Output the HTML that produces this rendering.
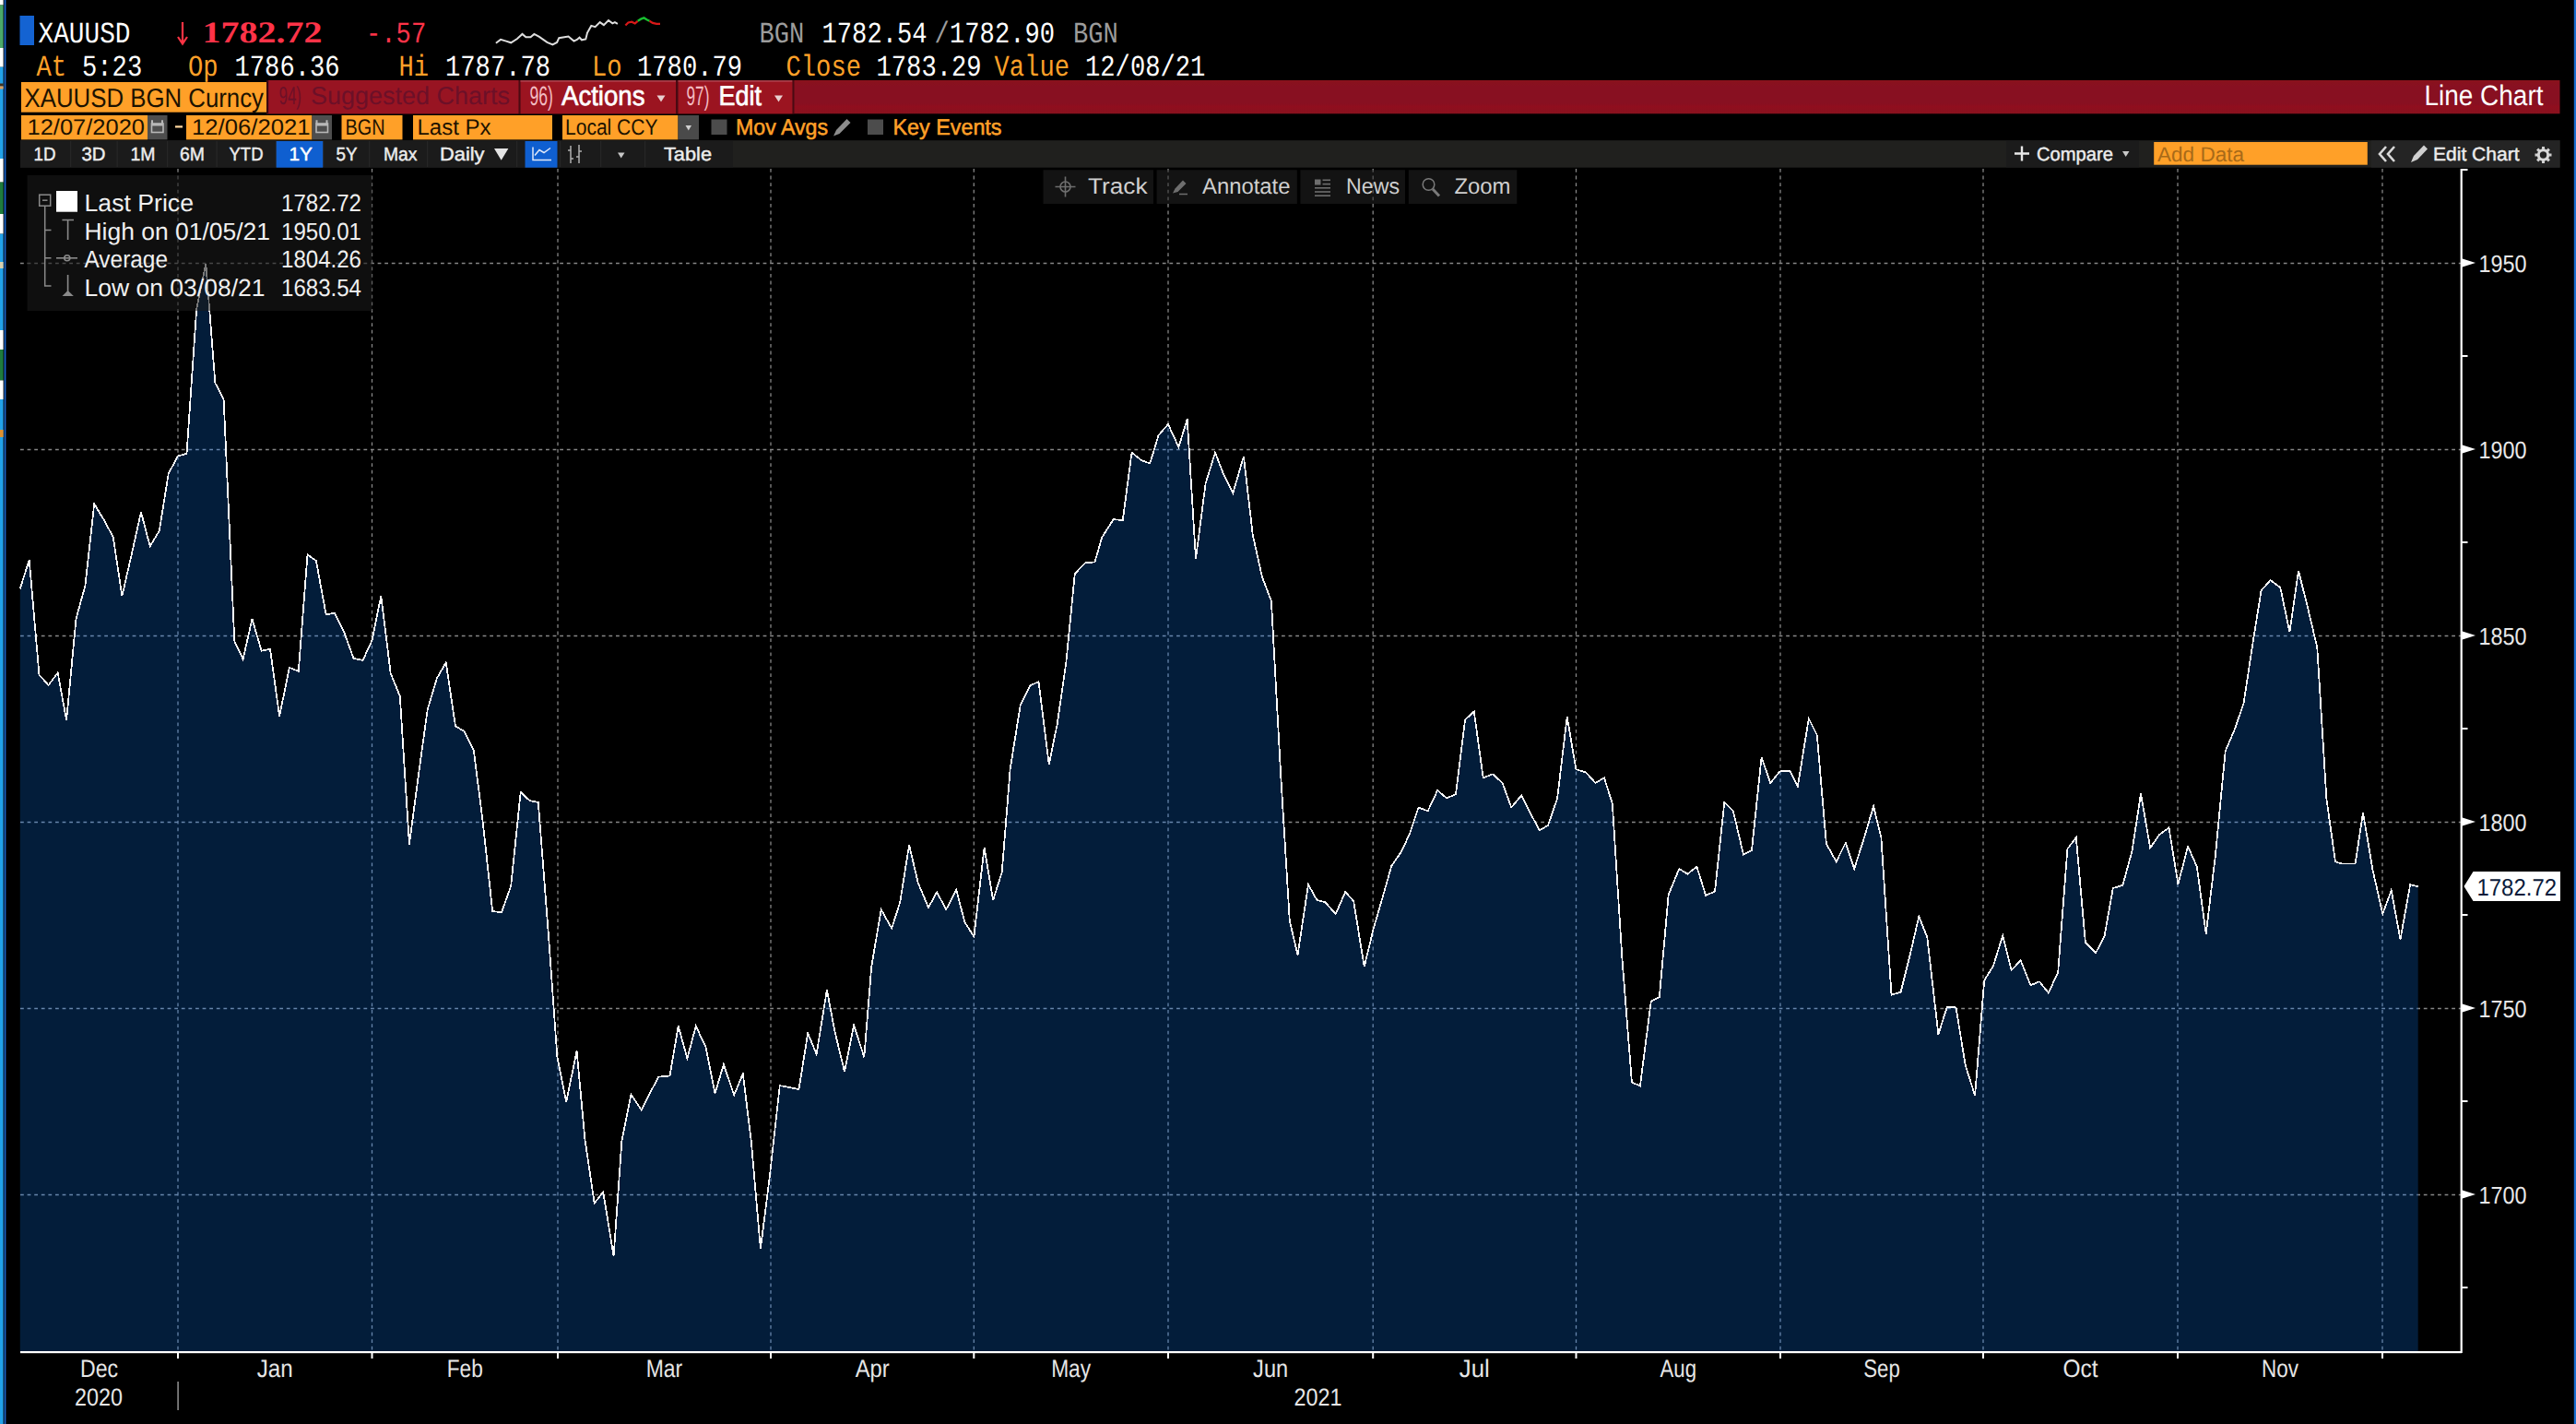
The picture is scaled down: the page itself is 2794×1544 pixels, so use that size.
<!DOCTYPE html>
<html><head><meta charset="utf-8"><title>XAUUSD BGN Curncy - Line Chart</title>
<style>html,body{margin:0;padding:0;background:#000;overflow:hidden}svg{display:block}text{white-space:pre}</style></head>
<body><svg width="2794" height="1544" viewBox="0 0 2794 1544" text-rendering="geometricPrecision">
<rect x="0" y="0" width="2794" height="1544" fill="#000" />
<clipPath id="fillclip"><polygon points="21.8,1466 21.8,638.4 31.7,607.0 42.5,731.7 52.6,742.9 62.7,729.4 72.1,781.1 82.5,671.0 92.4,635.1 102.2,546.3 112.6,563.6 122.7,582.2 132.4,646.3 142.7,601.3 153.0,555.3 162.7,592.4 172.8,575.5 182.7,513.7 192.8,494.6 202.5,491.7 213.2,334.8 223.3,285.8 233.4,415.3 242.6,432.7 254.3,695.0 263.6,714.8 273.5,671.0 283.6,705.8 293.0,703.6 303.1,776.6 313.9,723.8 323.8,727.9 333.5,601.3 342.9,608.1 353.7,666.5 363.1,664.7 373.3,685.6 383.4,713.7 393.5,716.0 403.4,694.6 413.3,646.3 423.7,730.1 433.8,754.8 443.9,915.5 453.8,841.3 463.7,769.4 473.8,735.7 483.7,718.2 494.0,787.4 503.7,793.0 513.8,813.3 523.9,893.0 534.2,988.1 544.0,989.2 554.2,960.7 564.7,858.9 574.2,867.9 583.8,870.1 594.2,1003.8 604.3,1145.2 614.2,1194.6 625.6,1139.6 634.4,1235.1 644.7,1304.7 654.2,1292.4 665.6,1362.0 674.4,1237.3 684.5,1186.7 695.7,1203.6 704.7,1185.6 714.4,1167.6 726.5,1166.5 735.7,1112.6 745.4,1147.4 754.8,1112.6 765.4,1135.1 775.5,1185.6 784.9,1154.2 796.2,1187.4 805.8,1164.3 814.8,1237.3 824.9,1354.2 835.1,1273.3 845.8,1177.1 855.3,1178.9 866.5,1181.1 876.2,1120.4 885.6,1142.9 896.9,1073.3 905.4,1118.2 916.0,1162.0 926.1,1111.5 937.3,1146.3 945.2,1048.1 955.7,986.3 967.2,1006.5 976.2,978.4 986.1,916.2 995.7,957.1 1007.0,984.0 1016.2,967.2 1026.1,986.3 1037.3,964.9 1046.3,999.8 1056.4,1015.5 1067.6,918.9 1077.1,976.2 1086.7,945.8 1095.7,833.5 1106.7,764.9 1117.1,743.6 1126.5,739.1 1137.8,829.0 1146.7,785.2 1156.4,717.8 1165.8,622.2 1177.3,610.0 1187.4,609.5 1195.3,582.5 1207.6,563.2 1217.8,564.0 1227.5,490.7 1238.0,499.1 1247.3,502.5 1256.5,472.1 1267.0,460.0 1278.4,484.8 1287.7,454.4 1297.0,606.1 1307.6,524.4 1318.0,490.7 1327.8,516.0 1337.4,534.5 1348.9,494.9 1358.8,580.0 1368.9,625.5 1378.9,651.6 1389.1,838.9 1398.8,998.4 1407.5,1035.5 1419.0,959.1 1428.4,976.0 1437.4,978.2 1448.7,991.2 1459.2,967.0 1468.2,977.1 1479.7,1048.3 1489.6,1007.4 1499.7,972.6 1509.3,938.9 1519.4,924.3 1529.1,904.0 1538.5,875.5 1548.7,879.3 1559.2,856.9 1568.9,865.4 1579.0,861.3 1589.1,780.4 1598.8,771.5 1608.7,843.4 1619.0,839.3 1629.6,849.0 1639.2,875.5 1650.2,862.5 1659.9,881.6 1669.6,900.2 1679.0,895.1 1689.1,865.8 1699.7,777.1 1709.4,834.2 1720.2,837.5 1730.3,848.8 1740.0,843.6 1748.8,871.2 1759.3,1037.5 1769.9,1173.5 1778.9,1177.5 1790.8,1085.4 1799.8,1081.3 1809.7,970.1 1821.3,942.0 1830.3,947.6 1840.4,939.8 1850.1,970.8 1860.0,966.7 1870.3,870.1 1879.8,879.1 1891.0,926.7 1900.0,921.8 1910.6,820.7 1920.2,849.2 1930.3,836.4 1941.6,836.0 1949.9,852.6 1961.8,779.1 1970.8,797.1 1980.9,915.1 1991.7,934.2 2001.8,913.9 2011.2,942.0 2021.6,909.4 2032.1,874.2 2040.4,908.3 2051.5,1078.7 2061.6,1075.7 2071.7,1035.3 2081.3,993.7 2090.3,1016.2 2102.4,1121.6 2111.8,1091.7 2121.5,1092.4 2131.8,1155.3 2142.1,1187.9 2152.2,1063.1 2161.9,1047.4 2172.2,1014.4 2181.7,1051.9 2191.6,1041.3 2202.4,1068.3 2212.0,1064.3 2221.9,1076.6 2232.2,1054.2 2242.4,920.4 2251.8,908.1 2261.9,1022.0 2273.1,1033.3 2282.6,1014.8 2291.8,963.1 2302.4,959.8 2312.5,922.7 2322.0,860.6 2332.2,919.3 2342.4,904.7 2352.5,897.5 2362.4,958.7 2373.1,917.8 2382.8,939.6 2392.7,1012.6 2402.8,928.3 2413.7,814.5 2423.8,790.9 2433.5,762.8 2443.4,697.6 2452.6,640.3 2462.5,629.1 2473.3,637.0 2483.4,685.3 2493.0,619.0 2502.9,658.3 2513.3,702.1 2523.4,866.2 2533.0,934.4 2540.0,936.5 2554.6,936.5 2563.0,881.1 2573.5,943.1 2584.3,991.0 2593.7,965.4 2603.5,1018.6 2614.2,959.1 2622.7,961.3 2622.7,1466"/></clipPath>
<g stroke="#868686" stroke-width="1.3" stroke-dasharray="3.8 3.8" >
<line x1="22" y1="285.5" x2="2670" y2="285.5"/>
<line x1="22" y1="487.5" x2="2670" y2="487.5"/>
<line x1="22" y1="689.5" x2="2670" y2="689.5"/>
<line x1="22" y1="891.5" x2="2670" y2="891.5"/>
<line x1="22" y1="1093.5" x2="2670" y2="1093.5"/>
<line x1="22" y1="1295.5" x2="2670" y2="1295.5"/>
<line x1="193" y1="183" x2="193" y2="1466"/>
<line x1="403.5" y1="183" x2="403.5" y2="1466"/>
<line x1="605" y1="183" x2="605" y2="1466"/>
<line x1="836" y1="183" x2="836" y2="1466"/>
<line x1="1056.3" y1="183" x2="1056.3" y2="1466"/>
<line x1="1267" y1="183" x2="1267" y2="1466"/>
<line x1="1489.2" y1="183" x2="1489.2" y2="1466"/>
<line x1="1709.5" y1="183" x2="1709.5" y2="1466"/>
<line x1="1931" y1="183" x2="1931" y2="1466"/>
<line x1="2151" y1="183" x2="2151" y2="1466"/>
<line x1="2362" y1="183" x2="2362" y2="1466"/>
<line x1="2584" y1="183" x2="2584" y2="1466"/>
</g>
<polygon points="21.8,1466 21.8,638.4 31.7,607.0 42.5,731.7 52.6,742.9 62.7,729.4 72.1,781.1 82.5,671.0 92.4,635.1 102.2,546.3 112.6,563.6 122.7,582.2 132.4,646.3 142.7,601.3 153.0,555.3 162.7,592.4 172.8,575.5 182.7,513.7 192.8,494.6 202.5,491.7 213.2,334.8 223.3,285.8 233.4,415.3 242.6,432.7 254.3,695.0 263.6,714.8 273.5,671.0 283.6,705.8 293.0,703.6 303.1,776.6 313.9,723.8 323.8,727.9 333.5,601.3 342.9,608.1 353.7,666.5 363.1,664.7 373.3,685.6 383.4,713.7 393.5,716.0 403.4,694.6 413.3,646.3 423.7,730.1 433.8,754.8 443.9,915.5 453.8,841.3 463.7,769.4 473.8,735.7 483.7,718.2 494.0,787.4 503.7,793.0 513.8,813.3 523.9,893.0 534.2,988.1 544.0,989.2 554.2,960.7 564.7,858.9 574.2,867.9 583.8,870.1 594.2,1003.8 604.3,1145.2 614.2,1194.6 625.6,1139.6 634.4,1235.1 644.7,1304.7 654.2,1292.4 665.6,1362.0 674.4,1237.3 684.5,1186.7 695.7,1203.6 704.7,1185.6 714.4,1167.6 726.5,1166.5 735.7,1112.6 745.4,1147.4 754.8,1112.6 765.4,1135.1 775.5,1185.6 784.9,1154.2 796.2,1187.4 805.8,1164.3 814.8,1237.3 824.9,1354.2 835.1,1273.3 845.8,1177.1 855.3,1178.9 866.5,1181.1 876.2,1120.4 885.6,1142.9 896.9,1073.3 905.4,1118.2 916.0,1162.0 926.1,1111.5 937.3,1146.3 945.2,1048.1 955.7,986.3 967.2,1006.5 976.2,978.4 986.1,916.2 995.7,957.1 1007.0,984.0 1016.2,967.2 1026.1,986.3 1037.3,964.9 1046.3,999.8 1056.4,1015.5 1067.6,918.9 1077.1,976.2 1086.7,945.8 1095.7,833.5 1106.7,764.9 1117.1,743.6 1126.5,739.1 1137.8,829.0 1146.7,785.2 1156.4,717.8 1165.8,622.2 1177.3,610.0 1187.4,609.5 1195.3,582.5 1207.6,563.2 1217.8,564.0 1227.5,490.7 1238.0,499.1 1247.3,502.5 1256.5,472.1 1267.0,460.0 1278.4,484.8 1287.7,454.4 1297.0,606.1 1307.6,524.4 1318.0,490.7 1327.8,516.0 1337.4,534.5 1348.9,494.9 1358.8,580.0 1368.9,625.5 1378.9,651.6 1389.1,838.9 1398.8,998.4 1407.5,1035.5 1419.0,959.1 1428.4,976.0 1437.4,978.2 1448.7,991.2 1459.2,967.0 1468.2,977.1 1479.7,1048.3 1489.6,1007.4 1499.7,972.6 1509.3,938.9 1519.4,924.3 1529.1,904.0 1538.5,875.5 1548.7,879.3 1559.2,856.9 1568.9,865.4 1579.0,861.3 1589.1,780.4 1598.8,771.5 1608.7,843.4 1619.0,839.3 1629.6,849.0 1639.2,875.5 1650.2,862.5 1659.9,881.6 1669.6,900.2 1679.0,895.1 1689.1,865.8 1699.7,777.1 1709.4,834.2 1720.2,837.5 1730.3,848.8 1740.0,843.6 1748.8,871.2 1759.3,1037.5 1769.9,1173.5 1778.9,1177.5 1790.8,1085.4 1799.8,1081.3 1809.7,970.1 1821.3,942.0 1830.3,947.6 1840.4,939.8 1850.1,970.8 1860.0,966.7 1870.3,870.1 1879.8,879.1 1891.0,926.7 1900.0,921.8 1910.6,820.7 1920.2,849.2 1930.3,836.4 1941.6,836.0 1949.9,852.6 1961.8,779.1 1970.8,797.1 1980.9,915.1 1991.7,934.2 2001.8,913.9 2011.2,942.0 2021.6,909.4 2032.1,874.2 2040.4,908.3 2051.5,1078.7 2061.6,1075.7 2071.7,1035.3 2081.3,993.7 2090.3,1016.2 2102.4,1121.6 2111.8,1091.7 2121.5,1092.4 2131.8,1155.3 2142.1,1187.9 2152.2,1063.1 2161.9,1047.4 2172.2,1014.4 2181.7,1051.9 2191.6,1041.3 2202.4,1068.3 2212.0,1064.3 2221.9,1076.6 2232.2,1054.2 2242.4,920.4 2251.8,908.1 2261.9,1022.0 2273.1,1033.3 2282.6,1014.8 2291.8,963.1 2302.4,959.8 2312.5,922.7 2322.0,860.6 2332.2,919.3 2342.4,904.7 2352.5,897.5 2362.4,958.7 2373.1,917.8 2382.8,939.6 2392.7,1012.6 2402.8,928.3 2413.7,814.5 2423.8,790.9 2433.5,762.8 2443.4,697.6 2452.6,640.3 2462.5,629.1 2473.3,637.0 2483.4,685.3 2493.0,619.0 2502.9,658.3 2513.3,702.1 2523.4,866.2 2533.0,934.4 2540.0,936.5 2554.6,936.5 2563.0,881.1 2573.5,943.1 2584.3,991.0 2593.7,965.4 2603.5,1018.6 2614.2,959.1 2622.7,961.3 2622.7,1466" fill="#031d3a"/>
<g stroke="#6685ab" stroke-width="1.3" stroke-dasharray="3.8 3.8" clip-path="url(#fillclip)">
<line x1="22" y1="285.5" x2="2670" y2="285.5"/>
<line x1="22" y1="487.5" x2="2670" y2="487.5"/>
<line x1="22" y1="689.5" x2="2670" y2="689.5"/>
<line x1="22" y1="891.5" x2="2670" y2="891.5"/>
<line x1="22" y1="1093.5" x2="2670" y2="1093.5"/>
<line x1="22" y1="1295.5" x2="2670" y2="1295.5"/>
<line x1="193" y1="183" x2="193" y2="1466"/>
<line x1="403.5" y1="183" x2="403.5" y2="1466"/>
<line x1="605" y1="183" x2="605" y2="1466"/>
<line x1="836" y1="183" x2="836" y2="1466"/>
<line x1="1056.3" y1="183" x2="1056.3" y2="1466"/>
<line x1="1267" y1="183" x2="1267" y2="1466"/>
<line x1="1489.2" y1="183" x2="1489.2" y2="1466"/>
<line x1="1709.5" y1="183" x2="1709.5" y2="1466"/>
<line x1="1931" y1="183" x2="1931" y2="1466"/>
<line x1="2151" y1="183" x2="2151" y2="1466"/>
<line x1="2362" y1="183" x2="2362" y2="1466"/>
<line x1="2584" y1="183" x2="2584" y2="1466"/>
</g>
<polyline points="21.8,638.4 31.7,607.0 42.5,731.7 52.6,742.9 62.7,729.4 72.1,781.1 82.5,671.0 92.4,635.1 102.2,546.3 112.6,563.6 122.7,582.2 132.4,646.3 142.7,601.3 153.0,555.3 162.7,592.4 172.8,575.5 182.7,513.7 192.8,494.6 202.5,491.7 213.2,334.8 223.3,285.8 233.4,415.3 242.6,432.7 254.3,695.0 263.6,714.8 273.5,671.0 283.6,705.8 293.0,703.6 303.1,776.6 313.9,723.8 323.8,727.9 333.5,601.3 342.9,608.1 353.7,666.5 363.1,664.7 373.3,685.6 383.4,713.7 393.5,716.0 403.4,694.6 413.3,646.3 423.7,730.1 433.8,754.8 443.9,915.5 453.8,841.3 463.7,769.4 473.8,735.7 483.7,718.2 494.0,787.4 503.7,793.0 513.8,813.3 523.9,893.0 534.2,988.1 544.0,989.2 554.2,960.7 564.7,858.9 574.2,867.9 583.8,870.1 594.2,1003.8 604.3,1145.2 614.2,1194.6 625.6,1139.6 634.4,1235.1 644.7,1304.7 654.2,1292.4 665.6,1362.0 674.4,1237.3 684.5,1186.7 695.7,1203.6 704.7,1185.6 714.4,1167.6 726.5,1166.5 735.7,1112.6 745.4,1147.4 754.8,1112.6 765.4,1135.1 775.5,1185.6 784.9,1154.2 796.2,1187.4 805.8,1164.3 814.8,1237.3 824.9,1354.2 835.1,1273.3 845.8,1177.1 855.3,1178.9 866.5,1181.1 876.2,1120.4 885.6,1142.9 896.9,1073.3 905.4,1118.2 916.0,1162.0 926.1,1111.5 937.3,1146.3 945.2,1048.1 955.7,986.3 967.2,1006.5 976.2,978.4 986.1,916.2 995.7,957.1 1007.0,984.0 1016.2,967.2 1026.1,986.3 1037.3,964.9 1046.3,999.8 1056.4,1015.5 1067.6,918.9 1077.1,976.2 1086.7,945.8 1095.7,833.5 1106.7,764.9 1117.1,743.6 1126.5,739.1 1137.8,829.0 1146.7,785.2 1156.4,717.8 1165.8,622.2 1177.3,610.0 1187.4,609.5 1195.3,582.5 1207.6,563.2 1217.8,564.0 1227.5,490.7 1238.0,499.1 1247.3,502.5 1256.5,472.1 1267.0,460.0 1278.4,484.8 1287.7,454.4 1297.0,606.1 1307.6,524.4 1318.0,490.7 1327.8,516.0 1337.4,534.5 1348.9,494.9 1358.8,580.0 1368.9,625.5 1378.9,651.6 1389.1,838.9 1398.8,998.4 1407.5,1035.5 1419.0,959.1 1428.4,976.0 1437.4,978.2 1448.7,991.2 1459.2,967.0 1468.2,977.1 1479.7,1048.3 1489.6,1007.4 1499.7,972.6 1509.3,938.9 1519.4,924.3 1529.1,904.0 1538.5,875.5 1548.7,879.3 1559.2,856.9 1568.9,865.4 1579.0,861.3 1589.1,780.4 1598.8,771.5 1608.7,843.4 1619.0,839.3 1629.6,849.0 1639.2,875.5 1650.2,862.5 1659.9,881.6 1669.6,900.2 1679.0,895.1 1689.1,865.8 1699.7,777.1 1709.4,834.2 1720.2,837.5 1730.3,848.8 1740.0,843.6 1748.8,871.2 1759.3,1037.5 1769.9,1173.5 1778.9,1177.5 1790.8,1085.4 1799.8,1081.3 1809.7,970.1 1821.3,942.0 1830.3,947.6 1840.4,939.8 1850.1,970.8 1860.0,966.7 1870.3,870.1 1879.8,879.1 1891.0,926.7 1900.0,921.8 1910.6,820.7 1920.2,849.2 1930.3,836.4 1941.6,836.0 1949.9,852.6 1961.8,779.1 1970.8,797.1 1980.9,915.1 1991.7,934.2 2001.8,913.9 2011.2,942.0 2021.6,909.4 2032.1,874.2 2040.4,908.3 2051.5,1078.7 2061.6,1075.7 2071.7,1035.3 2081.3,993.7 2090.3,1016.2 2102.4,1121.6 2111.8,1091.7 2121.5,1092.4 2131.8,1155.3 2142.1,1187.9 2152.2,1063.1 2161.9,1047.4 2172.2,1014.4 2181.7,1051.9 2191.6,1041.3 2202.4,1068.3 2212.0,1064.3 2221.9,1076.6 2232.2,1054.2 2242.4,920.4 2251.8,908.1 2261.9,1022.0 2273.1,1033.3 2282.6,1014.8 2291.8,963.1 2302.4,959.8 2312.5,922.7 2322.0,860.6 2332.2,919.3 2342.4,904.7 2352.5,897.5 2362.4,958.7 2373.1,917.8 2382.8,939.6 2392.7,1012.6 2402.8,928.3 2413.7,814.5 2423.8,790.9 2433.5,762.8 2443.4,697.6 2452.6,640.3 2462.5,629.1 2473.3,637.0 2483.4,685.3 2493.0,619.0 2502.9,658.3 2513.3,702.1 2523.4,866.2 2533.0,934.4 2540.0,936.5 2554.6,936.5 2563.0,881.1 2573.5,943.1 2584.3,991.0 2593.7,965.4 2603.5,1018.6 2614.2,959.1 2622.7,961.3" fill="none" stroke="#fff" stroke-width="1.75" stroke-linejoin="miter" shape-rendering="crispEdges"/>
<rect x="2668.6" y="183" width="2.2" height="1284" fill="#fff" />
<rect x="22" y="1465" width="2648" height="2.2" fill="#fff" />
<rect x="192" y="1466" width="2" height="7" fill="#fff" />
<rect x="402.5" y="1466" width="2" height="7" fill="#fff" />
<rect x="604" y="1466" width="2" height="7" fill="#fff" />
<rect x="835" y="1466" width="2" height="7" fill="#fff" />
<rect x="1055.3" y="1466" width="2" height="7" fill="#fff" />
<rect x="1266" y="1466" width="2" height="7" fill="#fff" />
<rect x="1488.2" y="1466" width="2" height="7" fill="#fff" />
<rect x="1708.5" y="1466" width="2" height="7" fill="#fff" />
<rect x="1930" y="1466" width="2" height="7" fill="#fff" />
<rect x="2150" y="1466" width="2" height="7" fill="#fff" />
<rect x="2361" y="1466" width="2" height="7" fill="#fff" />
<rect x="2583" y="1466" width="2" height="7" fill="#fff" />
<rect x="2670" y="1395.0" width="6.5" height="2" fill="#fff" />
<polygon points="2670,1290.2 2685,1295.0 2670,1299.8" fill="#fff"/>
<text x="2688.5" y="1305.2" font-family="Liberation Sans, DejaVu Sans, sans-serif" font-size="26.19" font-weight="normal" fill="#e8e8e8" text-anchor="start" textLength="52" lengthAdjust="spacingAndGlyphs" >1700</text>
<rect x="2670" y="1193.0" width="6.5" height="2" fill="#fff" />
<polygon points="2670,1088.2 2685,1093.0 2670,1097.8" fill="#fff"/>
<text x="2688.5" y="1103.2" font-family="Liberation Sans, DejaVu Sans, sans-serif" font-size="26.19" font-weight="normal" fill="#e8e8e8" text-anchor="start" textLength="52" lengthAdjust="spacingAndGlyphs" >1750</text>
<rect x="2670" y="991.0" width="6.5" height="2" fill="#fff" />
<polygon points="2670,886.2 2685,891.0 2670,895.8" fill="#fff"/>
<text x="2688.5" y="901.2" font-family="Liberation Sans, DejaVu Sans, sans-serif" font-size="26.19" font-weight="normal" fill="#e8e8e8" text-anchor="start" textLength="52" lengthAdjust="spacingAndGlyphs" >1800</text>
<rect x="2670" y="789.0" width="6.5" height="2" fill="#fff" />
<polygon points="2670,684.2 2685,689.0 2670,693.8" fill="#fff"/>
<text x="2688.5" y="699.2" font-family="Liberation Sans, DejaVu Sans, sans-serif" font-size="26.19" font-weight="normal" fill="#e8e8e8" text-anchor="start" textLength="52" lengthAdjust="spacingAndGlyphs" >1850</text>
<rect x="2670" y="587.0" width="6.5" height="2" fill="#fff" />
<polygon points="2670,482.2 2685,487.0 2670,491.8" fill="#fff"/>
<text x="2688.5" y="497.2" font-family="Liberation Sans, DejaVu Sans, sans-serif" font-size="26.19" font-weight="normal" fill="#e8e8e8" text-anchor="start" textLength="52" lengthAdjust="spacingAndGlyphs" >1900</text>
<rect x="2670" y="385.0" width="6.5" height="2" fill="#fff" />
<polygon points="2670,280.2 2685,285.0 2670,289.8" fill="#fff"/>
<text x="2688.5" y="295.2" font-family="Liberation Sans, DejaVu Sans, sans-serif" font-size="26.19" font-weight="normal" fill="#e8e8e8" text-anchor="start" textLength="52" lengthAdjust="spacingAndGlyphs" >1950</text>
<rect x="2670" y="183" width="6.5" height="2" fill="#fff" />
<polygon points="2672.5,961 2682.5,945 2777,945 2777,977 2682.5,977" fill="#fff"/>
<text x="2686.5" y="971" font-family="Liberation Sans, DejaVu Sans, sans-serif" font-size="25.9" font-weight="normal" fill="#0a1a3a" text-anchor="start" textLength="86.5" lengthAdjust="spacingAndGlyphs" >1782.72</text>
<text x="87.0" y="1493.4" font-family="Liberation Sans, DejaVu Sans, sans-serif" font-size="27.05" font-weight="normal" fill="#e6e6e6" text-anchor="start" textLength="41" lengthAdjust="spacingAndGlyphs" >Dec</text>
<text x="278.75" y="1493.4" font-family="Liberation Sans, DejaVu Sans, sans-serif" font-size="27.05" font-weight="normal" fill="#e6e6e6" text-anchor="start" textLength="39" lengthAdjust="spacingAndGlyphs" >Jan</text>
<text x="484.75" y="1493.4" font-family="Liberation Sans, DejaVu Sans, sans-serif" font-size="27.05" font-weight="normal" fill="#e6e6e6" text-anchor="start" textLength="39" lengthAdjust="spacingAndGlyphs" >Feb</text>
<text x="700.75" y="1493.4" font-family="Liberation Sans, DejaVu Sans, sans-serif" font-size="27.05" font-weight="normal" fill="#e6e6e6" text-anchor="start" textLength="39.5" lengthAdjust="spacingAndGlyphs" >Mar</text>
<text x="927.65" y="1493.4" font-family="Liberation Sans, DejaVu Sans, sans-serif" font-size="27.05" font-weight="normal" fill="#e6e6e6" text-anchor="start" textLength="37" lengthAdjust="spacingAndGlyphs" >Apr</text>
<text x="1140.15" y="1493.4" font-family="Liberation Sans, DejaVu Sans, sans-serif" font-size="27.05" font-weight="normal" fill="#e6e6e6" text-anchor="start" textLength="43" lengthAdjust="spacingAndGlyphs" >May</text>
<text x="1359.1" y="1493.4" font-family="Liberation Sans, DejaVu Sans, sans-serif" font-size="27.05" font-weight="normal" fill="#e6e6e6" text-anchor="start" textLength="38" lengthAdjust="spacingAndGlyphs" >Jun</text>
<text x="1582.85" y="1493.4" font-family="Liberation Sans, DejaVu Sans, sans-serif" font-size="27.05" font-weight="normal" fill="#e6e6e6" text-anchor="start" textLength="33" lengthAdjust="spacingAndGlyphs" >Jul</text>
<text x="1800.5" y="1493.4" font-family="Liberation Sans, DejaVu Sans, sans-serif" font-size="27.05" font-weight="normal" fill="#e6e6e6" text-anchor="start" textLength="39.5" lengthAdjust="spacingAndGlyphs" >Aug</text>
<text x="2021.25" y="1493.4" font-family="Liberation Sans, DejaVu Sans, sans-serif" font-size="27.05" font-weight="normal" fill="#e6e6e6" text-anchor="start" textLength="39.5" lengthAdjust="spacingAndGlyphs" >Sep</text>
<text x="2237.5" y="1493.4" font-family="Liberation Sans, DejaVu Sans, sans-serif" font-size="27.05" font-weight="normal" fill="#e6e6e6" text-anchor="start" textLength="38" lengthAdjust="spacingAndGlyphs" >Oct</text>
<text x="2453.0" y="1493.4" font-family="Liberation Sans, DejaVu Sans, sans-serif" font-size="27.05" font-weight="normal" fill="#e6e6e6" text-anchor="start" textLength="40" lengthAdjust="spacingAndGlyphs" >Nov</text>
<text x="81" y="1523.6" font-family="Liberation Sans, DejaVu Sans, sans-serif" font-size="26.62" font-weight="normal" fill="#e6e6e6" text-anchor="start" textLength="52" lengthAdjust="spacingAndGlyphs" >2020</text>
<text x="1403.5" y="1523.6" font-family="Liberation Sans, DejaVu Sans, sans-serif" font-size="26.62" font-weight="normal" fill="#e6e6e6" text-anchor="start" textLength="52" lengthAdjust="spacingAndGlyphs" >2021</text>
<rect x="192.3" y="1498" width="1.6" height="31" fill="#8a8a8a" />
<rect x="21.5" y="17" width="15.5" height="32" fill="#1463d2" />
<text x="41.5" y="45.5" font-family="Liberation Mono, DejaVu Sans Mono, monospace" font-size="32.33" font-weight="normal" fill="#fff" text-anchor="start" textLength="100" lengthAdjust="spacingAndGlyphs" >XAUUSD</text>
<path d="M198,24 V46 M193,40 L198,47.5 L203,40" stroke="#ff3344" stroke-width="2.2" fill="none"/>
<text x="219.5" y="45.8" font-family="Liberation Serif, DejaVu Serif, serif" font-size="32.78" font-weight="bold" fill="#ff3348" text-anchor="start" textLength="130" lengthAdjust="spacingAndGlyphs" >1782.72</text>
<text x="397" y="45.5" font-family="Liberation Mono, DejaVu Sans Mono, monospace" font-size="32.33" font-weight="normal" fill="#ff3348" text-anchor="start" textLength="65.2" lengthAdjust="spacingAndGlyphs" >-.57</text>
<text x="823.5" y="45.5" font-family="Liberation Mono, DejaVu Sans Mono, monospace" font-size="32.33" font-weight="normal" fill="#9c9c9c" text-anchor="start" textLength="48.9" lengthAdjust="spacingAndGlyphs" >BGN</text>
<text x="891.5" y="45.5" font-family="Liberation Mono, DejaVu Sans Mono, monospace" font-size="32.33" font-weight="normal" fill="#fff" text-anchor="start" textLength="114.1" lengthAdjust="spacingAndGlyphs" >1782.54</text>
<text x="1013.5" y="45.5" font-family="Liberation Mono, DejaVu Sans Mono, monospace" font-size="32.33" font-weight="normal" fill="#9c9c9c" text-anchor="start" textLength="16.3" lengthAdjust="spacingAndGlyphs" >/</text>
<text x="1030" y="45.5" font-family="Liberation Mono, DejaVu Sans Mono, monospace" font-size="32.33" font-weight="normal" fill="#fff" text-anchor="start" textLength="114.1" lengthAdjust="spacingAndGlyphs" >1782.90</text>
<text x="1164" y="45.5" font-family="Liberation Mono, DejaVu Sans Mono, monospace" font-size="32.33" font-weight="normal" fill="#9c9c9c" text-anchor="start" textLength="48.9" lengthAdjust="spacingAndGlyphs" >BGN</text>
<polyline points="537.9,46.7 543,42.9 549,44.6 554.2,46.3 561,42 566.5,36.9 570.4,40.3 575.5,40.3 579.4,36.9 584.9,39.9 593.4,45.9 599.4,48.4 604.1,45.9 606.3,41.2 616.5,39.5 622.5,44.6 625.9,42.9 628.5,40.7 631,43.3 635.3,42.5 637,35.6 641.3,27.9 645.5,29.2 650.7,24.1 654.9,27.1 660,22 664.3,25.4 666.9,24.1 669.9,25.8" fill="none" stroke="#dedede" stroke-width="2"/>
<polyline points="678.4,27.5 681.4,24.5 685.2,23.7 688.7,25.4 691.7,22.8" fill="none" stroke="#d81818" stroke-width="2.2"/>
<polyline points="691.7,22.8 695.1,20.7 698.5,19.4 701.9,21.5 704.5,22.8" fill="none" stroke="#18c030" stroke-width="2.4"/>
<polyline points="704.5,22.8 707.9,24.9 712.1,25.8 716,25.8" fill="none" stroke="#d81818" stroke-width="2.2"/>
<text x="39.5" y="81.5" font-family="Liberation Mono, DejaVu Sans Mono, monospace" font-size="32.33" font-weight="normal" fill="#ffa028" text-anchor="start" textLength="32.6" lengthAdjust="spacingAndGlyphs" >At</text>
<text x="89" y="81.5" font-family="Liberation Mono, DejaVu Sans Mono, monospace" font-size="32.33" font-weight="normal" fill="#fff" text-anchor="start" textLength="65.2" lengthAdjust="spacingAndGlyphs" >5:23</text>
<text x="204" y="81.5" font-family="Liberation Mono, DejaVu Sans Mono, monospace" font-size="32.33" font-weight="normal" fill="#ffa028" text-anchor="start" textLength="32.6" lengthAdjust="spacingAndGlyphs" >Op</text>
<text x="254.5" y="81.5" font-family="Liberation Mono, DejaVu Sans Mono, monospace" font-size="32.33" font-weight="normal" fill="#fff" text-anchor="start" textLength="114.1" lengthAdjust="spacingAndGlyphs" >1786.36</text>
<text x="432.5" y="81.5" font-family="Liberation Mono, DejaVu Sans Mono, monospace" font-size="32.33" font-weight="normal" fill="#ffa028" text-anchor="start" textLength="32.6" lengthAdjust="spacingAndGlyphs" >Hi</text>
<text x="483" y="81.5" font-family="Liberation Mono, DejaVu Sans Mono, monospace" font-size="32.33" font-weight="normal" fill="#fff" text-anchor="start" textLength="114.1" lengthAdjust="spacingAndGlyphs" >1787.78</text>
<text x="642" y="81.5" font-family="Liberation Mono, DejaVu Sans Mono, monospace" font-size="32.33" font-weight="normal" fill="#ffa028" text-anchor="start" textLength="32.6" lengthAdjust="spacingAndGlyphs" >Lo</text>
<text x="691" y="81.5" font-family="Liberation Mono, DejaVu Sans Mono, monospace" font-size="32.33" font-weight="normal" fill="#fff" text-anchor="start" textLength="114.1" lengthAdjust="spacingAndGlyphs" >1780.79</text>
<text x="852.5" y="81.5" font-family="Liberation Mono, DejaVu Sans Mono, monospace" font-size="32.33" font-weight="normal" fill="#ffa028" text-anchor="start" textLength="81.5" lengthAdjust="spacingAndGlyphs" >Close</text>
<text x="950.5" y="81.5" font-family="Liberation Mono, DejaVu Sans Mono, monospace" font-size="32.33" font-weight="normal" fill="#fff" text-anchor="start" textLength="114.1" lengthAdjust="spacingAndGlyphs" >1783.29</text>
<text x="1078.5" y="81.5" font-family="Liberation Mono, DejaVu Sans Mono, monospace" font-size="32.33" font-weight="normal" fill="#ffa028" text-anchor="start" textLength="81.5" lengthAdjust="spacingAndGlyphs" >Value</text>
<text x="1177" y="81.5" font-family="Liberation Mono, DejaVu Sans Mono, monospace" font-size="32.33" font-weight="normal" fill="#fff" text-anchor="start" textLength="130.4" lengthAdjust="spacingAndGlyphs" >12/08/21</text>
<defs><linearGradient id="rg" x1="0" y1="0" x2="0" y2="1"><stop offset="0" stop-color="#8a121c"/><stop offset="0.18" stop-color="#881021"/><stop offset="0.7" stop-color="#881021"/><stop offset="0.78" stop-color="#900e1e"/><stop offset="1" stop-color="#88121e"/></linearGradient></defs>
<rect x="289" y="87" width="2487.5" height="36.3" fill="url(#rg)" />
<rect x="23" y="89" width="266" height="32.7" fill="#ffa028" />
<text x="26.5" y="115.7" font-family="Liberation Sans, DejaVu Sans, sans-serif" font-size="28.78" font-weight="normal" fill="#1c1200" text-anchor="start" textLength="259.5" lengthAdjust="spacingAndGlyphs" >XAUUSD BGN Curncy</text>
<rect x="289" y="87" width="273.5" height="36.3" fill="#981422" />
<rect x="289" y="87" width="2.2" height="36.3" fill="#3a0810" />
<text x="302.5" y="113.3" font-family="Liberation Sans, DejaVu Sans, sans-serif" font-size="27.34" font-weight="normal" fill="#6c1028" text-anchor="start" textLength="24.5" lengthAdjust="spacingAndGlyphs" >94)</text>
<text x="337" y="113.3" font-family="Liberation Sans, DejaVu Sans, sans-serif" font-size="27.34" font-weight="normal" fill="#6c1028" text-anchor="start" textLength="216" lengthAdjust="spacingAndGlyphs" >Suggested Charts</text>
<rect x="564.5" y="88" width="168.5" height="35.3" fill="#9b1420" />
<rect x="735.5" y="88" width="124" height="35.3" fill="#9b1420" />
<rect x="562.5" y="87" width="2" height="36.3" fill="#4a0a12" />
<rect x="564.5" y="87.3" width="168.5" height="1.3" fill="#b04a56" />
<rect x="733" y="87" width="2.5" height="36.3" fill="#4a0a12" />
<rect x="735.5" y="87.3" width="124" height="1.3" fill="#b04a56" />
<rect x="859.5" y="87" width="2" height="36.3" fill="#4a0a12" />
<text x="574.5" y="114.2" font-family="Liberation Sans, DejaVu Sans, sans-serif" font-size="29.5" font-weight="normal" fill="#f2bcc2" text-anchor="start" textLength="25.5" lengthAdjust="spacingAndGlyphs" >96)</text>
<text x="609" y="114.2" font-family="Liberation Sans, DejaVu Sans, sans-serif" font-size="29.93" font-weight="normal" fill="#fff" text-anchor="start" textLength="90.5" lengthAdjust="spacingAndGlyphs"  stroke="#fff" stroke-width="0.67" stroke-linejoin="round">Actions</text>
<polygon points="712.5,103.5 721.5,103.5 717,110.5" fill="#e8d0d0"/>
<text x="744.5" y="114.2" font-family="Liberation Sans, DejaVu Sans, sans-serif" font-size="29.5" font-weight="normal" fill="#f2bcc2" text-anchor="start" textLength="25" lengthAdjust="spacingAndGlyphs" >97)</text>
<text x="779.5" y="114.2" font-family="Liberation Sans, DejaVu Sans, sans-serif" font-size="29.93" font-weight="normal" fill="#fff" text-anchor="start" textLength="46.5" lengthAdjust="spacingAndGlyphs"  stroke="#fff" stroke-width="0.67" stroke-linejoin="round">Edit</text>
<polygon points="840,103.5 849,103.5 844.5,110.5" fill="#e8d0d0"/>
<text x="2629.5" y="113.8" font-family="Liberation Sans, DejaVu Sans, sans-serif" font-size="30.94" font-weight="normal" fill="#fff" text-anchor="start" textLength="129" lengthAdjust="spacingAndGlyphs" >Line Chart</text>
<rect x="23" y="125" width="137" height="26.4" fill="#ffa028" />
<text x="29.5" y="145.6" font-family="Liberation Sans, DejaVu Sans, sans-serif" font-size="24.17" font-weight="normal" fill="#1c1200" text-anchor="start" textLength="127.5" lengthAdjust="spacingAndGlyphs" >12/07/2020</text>
<rect x="160" y="125" width="21.5" height="26.4" fill="#4e4e4e" />
<path d="M165,130.3 v4 M176,130.3 v4" stroke="#b8b8b8" stroke-width="2" fill="none"/>
<rect x="164.5" y="134" width="12.5" height="9.5" fill="none" stroke="#b8b8b8" stroke-width="1.6"/>
<rect x="164.5" y="134" width="12.5" height="2.5" fill="#b8b8b8" />
<rect x="190" y="136.3" width="8" height="2.2" fill="#ffd8a0" />
<rect x="202" y="125" width="136.5" height="26.4" fill="#ffa028" />
<text x="208" y="145.6" font-family="Liberation Sans, DejaVu Sans, sans-serif" font-size="24.17" font-weight="normal" fill="#1c1200" text-anchor="start" textLength="128.5" lengthAdjust="spacingAndGlyphs" >12/06/2021</text>
<rect x="338.5" y="125" width="21.5" height="26.4" fill="#4e4e4e" />
<path d="M343.5,130.3 v4 M354.5,130.3 v4" stroke="#b8b8b8" stroke-width="2" fill="none"/>
<rect x="343.0" y="134" width="12.5" height="9.5" fill="none" stroke="#b8b8b8" stroke-width="1.6"/>
<rect x="343.0" y="134" width="12.5" height="2.5" fill="#b8b8b8" />
<rect x="370.5" y="125" width="66" height="26.4" fill="#ffa028" />
<text x="374.5" y="145.6" font-family="Liberation Sans, DejaVu Sans, sans-serif" font-size="24.17" font-weight="normal" fill="#1c1200" text-anchor="start" textLength="43" lengthAdjust="spacingAndGlyphs" >BGN</text>
<rect x="448" y="125" width="151" height="26.4" fill="#ffa028" />
<text x="452.5" y="145.6" font-family="Liberation Sans, DejaVu Sans, sans-serif" font-size="24.17" font-weight="normal" fill="#1c1200" text-anchor="start" textLength="80" lengthAdjust="spacingAndGlyphs" >Last Px</text>
<rect x="610" y="125" width="125.5" height="26.4" fill="#ffa028" />
<text x="613" y="145.6" font-family="Liberation Sans, DejaVu Sans, sans-serif" font-size="24.17" font-weight="normal" fill="#1c1200" text-anchor="start" textLength="100.5" lengthAdjust="spacingAndGlyphs" >Local CCY</text>
<rect x="735.5" y="125" width="22.5" height="26.4" fill="#4a4a4a" />
<polygon points="743.5,136 750,136 746.8,141.5" fill="#d0d0d0"/>
<rect x="771.5" y="129.5" width="17" height="16.5" fill="#4c4c4c" />
<text x="798" y="145.6" font-family="Liberation Sans, DejaVu Sans, sans-serif" font-size="24.17" font-weight="normal" fill="#ffa028" text-anchor="start" textLength="100" lengthAdjust="spacingAndGlyphs"  stroke="#ffa028" stroke-width="0.54" stroke-linejoin="round">Mov Avgs</text>
<path d="M904,147.5 L907,141 L918.5,129 L922.5,133 L910.5,145 Z" fill="#8c8c8c"/>
<rect x="941" y="129.5" width="17" height="16.5" fill="#4c4c4c" />
<text x="968.5" y="145.6" font-family="Liberation Sans, DejaVu Sans, sans-serif" font-size="24.17" font-weight="normal" fill="#ffa028" text-anchor="start" textLength="118" lengthAdjust="spacingAndGlyphs"  stroke="#ffa028" stroke-width="0.54" stroke-linejoin="round">Key Events</text>
<rect x="22" y="152.2" width="2754.5" height="29.5" fill="#20201e" />
<rect x="22" y="152.2" width="773" height="29.5" fill="#1b1b1b" />
<rect x="76" y="153" width="1.3" height="28" fill="#262626" />
<rect x="126.5" y="153" width="1.3" height="28" fill="#262626" />
<rect x="181" y="153" width="1.3" height="28" fill="#262626" />
<rect x="234.5" y="153" width="1.3" height="28" fill="#262626" />
<rect x="299" y="153" width="1.3" height="28" fill="#262626" />
<rect x="350" y="153" width="1.3" height="28" fill="#262626" />
<rect x="400" y="153" width="1.3" height="28" fill="#262626" />
<rect x="463" y="153" width="1.3" height="28" fill="#262626" />
<rect x="560" y="153" width="1.3" height="28" fill="#262626" />
<rect x="607" y="153" width="1.3" height="28" fill="#262626" />
<rect x="651" y="153" width="1.3" height="28" fill="#262626" />
<rect x="699" y="153" width="1.3" height="28" fill="#262626" />
<rect x="299.7" y="153" width="50.5" height="28.7" fill="#0f5fd0" />
<text x="36.5" y="173.6" font-family="Liberation Sans, DejaVu Sans, sans-serif" font-size="20.43" font-weight="normal" fill="#ececec" text-anchor="start" textLength="24" lengthAdjust="spacingAndGlyphs"  stroke="#ececec" stroke-width="0.45" stroke-linejoin="round">1D</text>
<text x="88.5" y="173.6" font-family="Liberation Sans, DejaVu Sans, sans-serif" font-size="20.43" font-weight="normal" fill="#ececec" text-anchor="start" textLength="26" lengthAdjust="spacingAndGlyphs"  stroke="#ececec" stroke-width="0.45" stroke-linejoin="round">3D</text>
<text x="141.5" y="173.6" font-family="Liberation Sans, DejaVu Sans, sans-serif" font-size="20.43" font-weight="normal" fill="#ececec" text-anchor="start" textLength="27" lengthAdjust="spacingAndGlyphs"  stroke="#ececec" stroke-width="0.45" stroke-linejoin="round">1M</text>
<text x="195" y="173.6" font-family="Liberation Sans, DejaVu Sans, sans-serif" font-size="20.43" font-weight="normal" fill="#ececec" text-anchor="start" textLength="27" lengthAdjust="spacingAndGlyphs"  stroke="#ececec" stroke-width="0.45" stroke-linejoin="round">6M</text>
<text x="248.5" y="173.6" font-family="Liberation Sans, DejaVu Sans, sans-serif" font-size="20.43" font-weight="normal" fill="#ececec" text-anchor="start" textLength="37" lengthAdjust="spacingAndGlyphs"  stroke="#ececec" stroke-width="0.45" stroke-linejoin="round">YTD</text>
<text x="313.5" y="173.6" font-family="Liberation Sans, DejaVu Sans, sans-serif" font-size="20.43" font-weight="normal" fill="#fff" text-anchor="start" textLength="25.5" lengthAdjust="spacingAndGlyphs"  stroke="#fff" stroke-width="0.45" stroke-linejoin="round">1Y</text>
<text x="364.5" y="173.6" font-family="Liberation Sans, DejaVu Sans, sans-serif" font-size="20.43" font-weight="normal" fill="#ececec" text-anchor="start" textLength="23" lengthAdjust="spacingAndGlyphs"  stroke="#ececec" stroke-width="0.45" stroke-linejoin="round">5Y</text>
<text x="416" y="173.6" font-family="Liberation Sans, DejaVu Sans, sans-serif" font-size="20.43" font-weight="normal" fill="#ececec" text-anchor="start" textLength="36.5" lengthAdjust="spacingAndGlyphs"  stroke="#ececec" stroke-width="0.45" stroke-linejoin="round">Max</text>
<text x="477" y="173.6" font-family="Liberation Sans, DejaVu Sans, sans-serif" font-size="20.43" font-weight="normal" fill="#ececec" text-anchor="start" textLength="48.5" lengthAdjust="spacingAndGlyphs"  stroke="#ececec" stroke-width="0.45" stroke-linejoin="round">Daily</text>
<polygon points="536,161 551.4,161 543.7,173.8" fill="#e4e4e4"/>
<rect x="569.5" y="153" width="35" height="28.7" fill="#0f5fd0" />
<path d="M578,159.5 V173.6 H598" stroke="#e0e8f8" stroke-width="1.5" fill="none"/>
<path d="M580,168.5 L585,162.5 L590,165.5 L597,160.5" stroke="#e0e8f8" stroke-width="1.5" fill="none"/>
<path d="M619,158 V177 M616,163 H619 M619,172 H622 M628,157 V177 M625,170 H628 M628,164 H631" stroke="#b0b0b0" stroke-width="1.5" fill="none"/>
<polygon points="670,165.5 677.5,165.5 673.7,171.5" fill="#c8c8c8"/>
<text x="720" y="173.6" font-family="Liberation Sans, DejaVu Sans, sans-serif" font-size="20.43" font-weight="normal" fill="#ececec" text-anchor="start" textLength="52" lengthAdjust="spacingAndGlyphs"  stroke="#ececec" stroke-width="0.45" stroke-linejoin="round">Table</text>
<rect x="2176" y="152.2" width="144" height="29.5" fill="#1b1b1b" />
<path d="M2185,166.5 H2201 M2193,158.5 V174.5" stroke="#e8e8e8" stroke-width="2.4" fill="none"/>
<text x="2209" y="173.6" font-family="Liberation Sans, DejaVu Sans, sans-serif" font-size="20.43" font-weight="normal" fill="#ececec" text-anchor="start" textLength="83" lengthAdjust="spacingAndGlyphs"  stroke="#ececec" stroke-width="0.45" stroke-linejoin="round">Compare</text>
<polygon points="2302,164 2309.5,164 2305.7,170" fill="#c8c8c8"/>
<rect x="2336.2" y="154" width="231.6" height="24.7" fill="#ffa028" />
<text x="2340" y="174.5" font-family="Liberation Sans, DejaVu Sans, sans-serif" font-size="22.3" font-weight="normal" fill="#a86a18" text-anchor="start" textLength="94" lengthAdjust="spacingAndGlyphs" >Add Data</text>
<rect x="2572" y="152.2" width="204.5" height="29.5" fill="#242424" />
<path d="M2588,159 L2581,167 L2588,175 M2597,159 L2590,167 L2597,175" stroke="#d8d8d8" stroke-width="2.6" fill="none"/>
<path d="M2615,176 L2618,169 L2629,157.5 L2633,161.5 L2622,173 Z" fill="#d0d0d0"/>
<text x="2639" y="173.6" font-family="Liberation Sans, DejaVu Sans, sans-serif" font-size="20.43" font-weight="normal" fill="#ececec" text-anchor="start" textLength="93.5" lengthAdjust="spacingAndGlyphs"  stroke="#ececec" stroke-width="0.45" stroke-linejoin="round">Edit Chart</text>
<path d="M2764.0,168.0 L2767.5,168.0 M2762.4,171.9 L2764.9,174.4 M2758.5,173.5 L2758.5,177.0 M2754.6,171.9 L2752.1,174.4 M2753.0,168.0 L2749.5,168.0 M2754.6,164.1 L2752.1,161.6 M2758.5,162.5 L2758.5,159.0 M2762.4,164.1 L2764.9,161.6 " stroke="#d0d0d0" stroke-width="3" fill="none"/>
<circle cx="2758.5" cy="168" r="5.2" fill="none" stroke="#d8d8d8" stroke-width="3"/>
<rect x="1131.5" y="184.3" width="119.5" height="36.7" fill="#262626" opacity="0.5"/>
<rect x="1254.6" y="184.3" width="152.2" height="36.7" fill="#262626" opacity="0.5"/>
<rect x="1410.4" y="184.3" width="113.6" height="36.7" fill="#262626" opacity="0.5"/>
<rect x="1527.8" y="184.3" width="117.5" height="36.7" fill="#262626" opacity="0.5"/>
<g stroke="#6e6e6e" stroke-width="1.6" fill="none"><circle cx="1155.5" cy="202.5" r="5.5"/><path d="M1144.5,202.5 H1166.5 M1155.5,191.5 V213.5"/></g>
<text x="1180" y="209.8" font-family="Liberation Sans, DejaVu Sans, sans-serif" font-size="24.17" font-weight="normal" fill="#cfcfcf" text-anchor="start" textLength="64.5" lengthAdjust="spacingAndGlyphs" >Track</text>
<path d="M1272,209.5 L1274.5,204.5 L1283,195.5 L1286.5,199 L1277.5,208 Z" fill="#6e6e6e"/><path d="M1279,210.5 H1288" stroke="#6e6e6e" stroke-width="1.5"/>
<text x="1304" y="209.8" font-family="Liberation Sans, DejaVu Sans, sans-serif" font-size="24.17" font-weight="normal" fill="#cfcfcf" text-anchor="start" textLength="95.5" lengthAdjust="spacingAndGlyphs" >Annotate</text>
<g fill="#6e6e6e"><rect x="1426" y="194.5" width="6.5" height="6"/><rect x="1434.5" y="194.5" width="8.5" height="1.6"/><rect x="1434.5" y="198.8" width="8.5" height="1.6"/><rect x="1426" y="203" width="17" height="1.6"/><rect x="1426" y="207.2" width="17" height="1.6"/><rect x="1426" y="211.4" width="17" height="1.6"/></g>
<text x="1460" y="209.8" font-family="Liberation Sans, DejaVu Sans, sans-serif" font-size="24.17" font-weight="normal" fill="#cfcfcf" text-anchor="start" textLength="58" lengthAdjust="spacingAndGlyphs" >News</text>
<g stroke="#7a7a7a" fill="none"><circle cx="1549.5" cy="200" r="6.3" stroke-width="1.5"/><path d="M1554,205 L1561,212.5" stroke-width="3"/></g>
<text x="1577.5" y="209.8" font-family="Liberation Sans, DejaVu Sans, sans-serif" font-size="24.17" font-weight="normal" fill="#cfcfcf" text-anchor="start" textLength="61" lengthAdjust="spacingAndGlyphs" >Zoom</text>
<rect x="29.6" y="190" width="374" height="147" fill="#191919" opacity="0.58"/>
<g stroke="#8a8a8a" stroke-width="1.5" fill="none"><rect x="42.7" y="211.2" width="12" height="12"/><path d="M46,217.2 H51.5"/><path d="M48.7,223.2 V310 H55.5 M48.7,249.5 H55.5 M48.7,279.7 H55.5"/></g>
<rect x="61" y="207" width="23" height="22.7" fill="#fff" />
<g stroke="#8a8a8a" stroke-width="1.6" fill="none"><path d="M67.4,238.5 H80 M73.6,238.5 V260"/><path d="M61,279.8 H84"/><circle cx="72.8" cy="279.8" r="3"/><path d="M73.6,298 V320"/></g>
<polygon points="67.5,321 79.8,321 73.6,315" fill="#8a8a8a"/>
<text x="91.5" y="229.4" font-family="Liberation Sans, DejaVu Sans, sans-serif" font-size="26.33" font-weight="normal" fill="#f0f0f0" text-anchor="start" textLength="118.5" lengthAdjust="spacingAndGlyphs" >Last Price</text>
<text x="305" y="229.4" font-family="Liberation Sans, DejaVu Sans, sans-serif" font-size="26.33" font-weight="normal" fill="#f0f0f0" text-anchor="start" textLength="87" lengthAdjust="spacingAndGlyphs" >1782.72</text>
<text x="91.5" y="259.6" font-family="Liberation Sans, DejaVu Sans, sans-serif" font-size="26.33" font-weight="normal" fill="#f0f0f0" text-anchor="start" textLength="201.5" lengthAdjust="spacingAndGlyphs" >High on 01/05/21</text>
<text x="305" y="259.6" font-family="Liberation Sans, DejaVu Sans, sans-serif" font-size="26.33" font-weight="normal" fill="#f0f0f0" text-anchor="start" textLength="87" lengthAdjust="spacingAndGlyphs" >1950.01</text>
<text x="91.5" y="289.6" font-family="Liberation Sans, DejaVu Sans, sans-serif" font-size="26.33" font-weight="normal" fill="#f0f0f0" text-anchor="start" textLength="90.5" lengthAdjust="spacingAndGlyphs" >Average</text>
<text x="305" y="289.6" font-family="Liberation Sans, DejaVu Sans, sans-serif" font-size="26.33" font-weight="normal" fill="#f0f0f0" text-anchor="start" textLength="87" lengthAdjust="spacingAndGlyphs" >1804.26</text>
<text x="91.5" y="320.5" font-family="Liberation Sans, DejaVu Sans, sans-serif" font-size="26.33" font-weight="normal" fill="#f0f0f0" text-anchor="start" textLength="196" lengthAdjust="spacingAndGlyphs" >Low on 03/08/21</text>
<text x="305" y="320.5" font-family="Liberation Sans, DejaVu Sans, sans-serif" font-size="26.33" font-weight="normal" fill="#f0f0f0" text-anchor="start" textLength="87" lengthAdjust="spacingAndGlyphs" >1683.54</text>
<rect x="0" y="0" width="3.6" height="5.5" fill="#fff" />
<rect x="0" y="5.5" width="3.6" height="46.5" fill="#4aa868" />
<rect x="0" y="52" width="3.6" height="20.700000000000003" fill="#fff" />
<rect x="0" y="72.7" width="3.6" height="99.3" fill="#22a2ea" />
<rect x="0" y="172" width="3.6" height="25.599999999999994" fill="#fff" />
<rect x="0" y="197.6" width="3.6" height="34.400000000000006" fill="#1e7c3c" />
<rect x="0" y="232" width="3.6" height="21.599999999999994" fill="#fff" />
<rect x="0" y="253.6" width="3.6" height="104.4" fill="#22a2ea" />
<rect x="0" y="358" width="3.6" height="21" fill="#fff" />
<rect x="0" y="379" width="3.6" height="33.39999999999998" fill="#1e7c3c" />
<rect x="0" y="412.4" width="3.6" height="20.600000000000023" fill="#fff" />
<rect x="0" y="433" width="3.6" height="1111" fill="#22a2ea" />
<rect x="0" y="90.5" width="3.6" height="3" fill="#403020" />
<rect x="0" y="93.5" width="3.6" height="3" fill="#e0a060" />
<rect x="0" y="284" width="3.6" height="7" fill="#d8d0b0" />
<rect x="0" y="466" width="3.6" height="8" fill="#e09030" />
<rect x="4.6" y="0" width="1.8" height="1544" fill="#1a63c8" />
<rect x="2791.8" y="0" width="2.2" height="1544" fill="#1a6fd0" />
</svg></body></html>
